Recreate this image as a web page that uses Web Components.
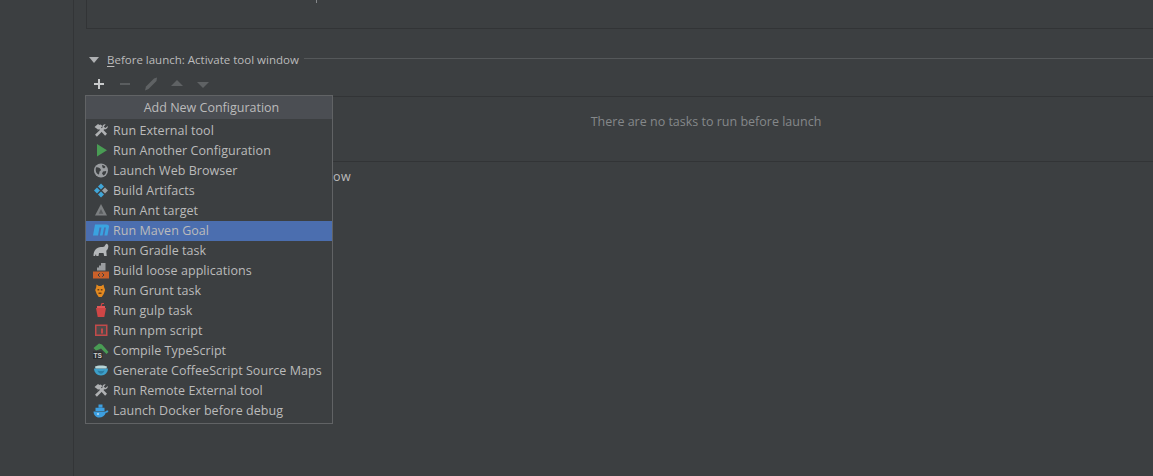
<!DOCTYPE html>
<html>
<head>
<meta charset="utf-8">
<style>
html, body { margin: 0; height: 100%; background: #3c3f41; overflow: hidden; }
body { font: 12.5px "Open Sans", "Liberation Sans", sans-serif; color: #bbbbbb; }
</style>
</head>
<body>
<config-page>
    <top-box></top-box>
    <before-launch>
        <task-menu>
            <menu-item icon="tools">Run External tool</menu-item>
            <menu-item icon="play">Run Another Configuration</menu-item>
            <menu-item icon="globe">Launch Web Browser</menu-item>
            <menu-item icon="artifact">Build Artifacts</menu-item>
            <menu-item icon="ant">Run Ant target</menu-item>
            <menu-item icon="maven" selected>Run Maven Goal</menu-item>
            <menu-item icon="gradle">Run Gradle task</menu-item>
            <menu-item icon="loose">Build loose applications</menu-item>
            <menu-item icon="grunt">Run Grunt task</menu-item>
            <menu-item icon="gulp">Run gulp task</menu-item>
            <menu-item icon="npm">Run npm script</menu-item>
            <menu-item icon="ts">Compile TypeScript</menu-item>
            <menu-item icon="coffee">Generate CoffeeScript Source Maps</menu-item>
            <menu-item icon="tools">Run Remote External tool</menu-item>
            <menu-item icon="docker">Launch Docker before debug</menu-item>
        </task-menu>
    </before-launch>
</config-page>

<script>
// icons are all 16x16
var icons = {
    tools: `<path d="M1.500 4 5 1l1.500 1 1-.5 2 1.500-1.500 1.500 6 6.300-1.900 1.900-6.100-6.700L4 8 5 6.500z" fill="#afb1b3"/><path d="M14.800 3 12.400 5 10.800 3.700 12.700 1.300C10.800.8 9 2.500 9.500 4.500L2 11.800l1.900 1.900 7.300-7.400c2 .5 4-1.300 3.600-3.300z" fill="#afb1b3"/>`,
    play: `<path d="M4 1v12.500l10-6.250z" fill="#499c54"/>`,
    globe: `<circle cx="8" cy="7.500" r="7" fill="#9a9da0"/><path d="M3 4.500c2-.5 3.500.5 4.500 1.500s0 2-1 2.500l-.5 3c-2.500-.5-4-3.500-3-7zM9 2c1.500 0 3 1 3.500 2L11 5.500 9.500 4.500zM10 8.500l3.200-.5c0 2-1 3.500-2.700 4.500L9 10.500z" fill="#3c3f41"/>`,
    artifact: `<path d="M8 .5l3 3-3 3-3-3z" fill="#40a6d8"/><path d="M4 4.500l3 3-3 3-3-3z" fill="#40a6d8"/><path d="M12 4.500l3 3-3 3-3-3z" fill="#9aa0a4"/><path d="M8 8.500l3 3-3 3-3-3z" fill="#40a6d8"/>`,
    ant: `<path d="M8 1l6 11.500H2z" fill="#7c7f81"/><path d="M8 6l2.300 4.800H5.700z" fill="#5a5d5f"/>`,
    maven: `<path d="M0 12.500 2 1.500h11.500c1.500 0 2.700 1 2.500 2.200L14.400 12.500h-3l1.500-8h-1.800L9.600 12.500H6.900l1.500-8H6.500L5 12.500z" fill="#3aa3e0"/>`,
    gradle: `<path d="M.5 13c0-5.500 3-9 7.500-9 1.500 0 2.800.3 3.500-.7S13 .3 14.200 1s1.500 2.300.8 4.200c-.4 1-1 2-1.700 2.600l.4 5.200h-2.500l-.7-3H6l-.5 3H3.300L3 11l-1 2z" fill="#b4b7b9"/>`,
    loose: `<path d="M8 0h4.500v7.500H4V4.500h2V2.500h2z" fill="#9a9da0"/><path d="M0 8.500h16v7H0z" fill="#c9602a"/><path d="M6.800 10.200 5 12 6.800 13.800M9.200 10.200 11 12 9.200 13.800" fill="none" stroke="#3c3f41" stroke-width="1"/>`,
    grunt: `<path d="M3.500 1.500l2.300 1.500h2.400L10.500 1.500l.7 3 1 2.500-1.500 4-2 3h-3l-2-3-1.500-4 1-2.500z" fill="#e48a20"/><path d="M4.500 6h1.700v1.500H4.500zM7.800 6h1.700v1.500H7.800zM5.500 9.500h3V11h-3z" fill="#6b3f16"/>`,
    gulp: `<path d="M3 5h10l-1.700 9H4.700z" fill="#cf4646"/><path d="M4 3h8v2H4z" fill="#e05858"/><path d="M8 3 9 .5h2" fill="none" stroke="#cf4646" stroke-width="1.200"/>`,
    npm: `<path d="M2 1.500h12.500V13H2z" fill="#c24a4a"/><path d="M3.500 3h9.500v8.500H3.500z" fill="#4f4a4a"/><path d="M8 5.500h2v5H8z" fill="#c24a4a"/>`,
    ts: `<path d="M.5 5 6 .5 9 1.500 15.500 9l-2 2L8 5.500 6 6.500 3 7.500z" fill="#499c54"/><rect x="0" y="8.500" width="9.500" height="7.500" fill="#2b2d2e"/><text x="4.800" y="14.700" font-size="6.500" font-weight="700" text-anchor="middle" fill="#d0d0d0" font-family="Liberation Sans">TS</text>`,
    coffee: `<path d="M1 5.500h14c0 3.700-2.800 7-7 7s-7-3.300-7-7z" fill="#3d9fc9"/><path d="M2 3.500C4 2 12 2 14 3.500L13.500 5.500h-11z" fill="#b8d6d8"/><path d="M4.500 7.500c2 .8 5 .8 7 0-.5 1.600-2 3.200-3.500 3.200S5 9.100 4.500 7.500z" fill="#2c7da3"/>`,
    docker: `<path d="M5.500 1.500h4v3h-4zM2.500 4.800h9V8h-9z" fill="#3d9fe0"/><path d="M.5 8.500h12c.5-1 1.800-1.200 3-.6-.5 1.300-1.500 1.800-2.700 1.800C11.800 12.500 9.500 14.500 6 14.500 3 14.500.7 12 .5 8.500z" fill="#3d9fe0"/><circle cx="5" cy="11" r="1" fill="#b8dcf5"/>`
};

var pageTemplate = document.createElement("template");
pageTemplate.innerHTML = `
<style>
    :host { display: flex; height: 476px; }
    #side { width: 73px; flex: none; border-right: 1px solid #333537; background: #3c3f41; }
    #main { flex: 1; min-width: 0; padding-left: 12px; }
</style>
<div id="side"></div>
<div id="main"><slot></slot></div>
`;

class ConfigPage extends HTMLElement {
    constructor() {
        super();
        this.attachShadow({mode: "open"});
    }
    connectedCallback() {
        this.shadowRoot.appendChild(pageTemplate.content.cloneNode(true));
    }
}

class TopBox extends HTMLElement {
    constructor() {
        super();
        this.attachShadow({mode: "open"});
        this.shadowRoot.innerHTML = `
        <style>
            :host { display: block; height: 28px; border-left: 1px solid #323436; border-bottom: 1px solid #323436; }
            div { width: 1px; height: 3px; margin-left: 229px; background: #85888a; }
        </style>
        <div></div>`;
    }
}

var launchTemplate = document.createElement("template");
launchTemplate.innerHTML = `
<style>
    :host { display: block; position: relative; margin-top: 22px; }
    #head { display: flex; align-items: center; height: 18px; }
    #arrow { width: 0; height: 0; border: 5px solid transparent; border-top: 6px solid #afb1b3; border-bottom: 0; margin: 0 8px 0 3px; }
    #title { white-space: nowrap; font-size: 11.5px; margin-top: -2px; }
    #title u { text-underline-offset: 2px; }
    #rule { flex: 1; height: 1px; background: #55585a; margin: -3px 0 0 5px; }
    #toolbar { display: flex; align-items: center; height: 27px; padding: 3px 0 0 5px; box-sizing: border-box; }
    #toolbar svg { width: 16px; height: 16px; margin-right: 10px; flex: none; }
    #tasks { height: 66px; border-top: 1px solid #323436; border-bottom: 1px solid #323436; display: flex; align-items: center; justify-content: center; padding: 0 0 16px 173px; box-sizing: border-box; color: #85888a; }
    #after { display: flex; justify-content: flex-end; width: 265px; padding-top: 6px; line-height: 18px; letter-spacing: .4px; }
    .menu { position: absolute; left: -1px; top: 44px; }
</style>
<div id="head">
    <span id="arrow"></span>
    <span id="title"><u>B</u>efore launch: Activate tool window</span>
    <span id="rule"></span>
</div>
<div id="toolbar">
    <svg viewBox="0 0 16 16"><path d="M3 8h10M8 3v10" stroke="#c8cacb" stroke-width="2"/></svg>
    <svg viewBox="0 0 16 16"><path d="M3 8h10" stroke="#5a5d5f" stroke-width="2"/></svg>
    <svg viewBox="0 0 16 16"><path d="M2 14.500 3 10.500 11 2.500 14 1.500 13.500 5 5.500 13z" fill="#5f6264"/></svg>
    <svg viewBox="0 0 16 16"><path d="M8 4l6 6H2z" fill="#5f6264"/></svg>
    <svg viewBox="0 0 16 16"><path d="M8 12 2 6h12z" fill="#5f6264"/></svg>
</div>
<div id="tasks">There are no tasks to run before launch</div>
<div id="after">Activate tool window</div>
<div class="menu"><slot></slot></div>
`;

class BeforeLaunch extends HTMLElement {
    constructor() {
        super();
        this.attachShadow({mode: "open"});
    }
    connectedCallback() {
        this.shadowRoot.appendChild(launchTemplate.content.cloneNode(true));
    }
}

var menuTemplate = document.createElement("template");
menuTemplate.innerHTML = `
<style>
    :host { display: block; width: 246px; background: #3c3f41; border: 1px solid #616365; }
    #title { height: 23px; line-height: 23px; padding-left: 5px; box-sizing: border-box; text-align: center; background: #4b4e53; }
    #list { padding: 2px 0; }
</style>
<div id="title">Add New Configuration</div>
<div id="list"><slot></slot></div>
`;

class TaskMenu extends HTMLElement {
    constructor() {
        super();
        this.attachShadow({mode: "open"});
    }
    connectedCallback() {
        this.shadowRoot.appendChild(menuTemplate.content.cloneNode(true));
    }
}

class MenuItem extends HTMLElement {
    constructor() {
        super();
        this.attachShadow({mode: "open"});
    }
    connectedCallback() {
        this.shadowRoot.innerHTML = `
        <style>
            :host { display: flex; align-items: center; height: 20px; white-space: nowrap; padding-left: 7px; letter-spacing: .05px; }
            :host([selected]) { background: #4b6eaf; }
            svg { width: 16px; height: 16px; margin-right: 4px; flex: none; }
            span { margin-top: -2px; }
        </style>
        <svg viewBox="0 0 16 16">${icons[this.getAttribute("icon")]}</svg>
        <span><slot></slot></span>`;
    }
}

customElements.define("config-page", ConfigPage);
customElements.define("top-box", TopBox);
customElements.define("before-launch", BeforeLaunch);
customElements.define("task-menu", TaskMenu);
customElements.define("menu-item", MenuItem);
</script>
</body>
</html>
